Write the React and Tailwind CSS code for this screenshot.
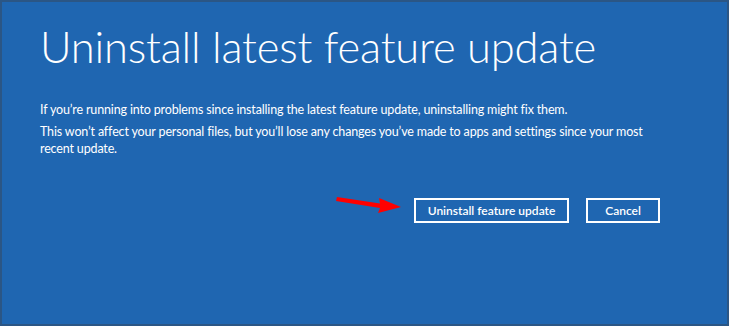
export default function App() {
  return (
    <div className="w-[729px] h-[326px] bg-[#1f66b1] border-2 border-[#2b5685] overflow-hidden font-['Segoe_UI','Lato','Liberation_Sans',sans-serif] text-white">
      <div className="w-[658px] pl-[38px] pt-[16px]">
        <h1 className="text-[43.5px] font-light leading-[56px] tracking-[-0.2px]">
          Uninstall latest feature update
        </h1>
        <div className="mt-[27px] text-[12.5px] leading-[17px] tracking-[-0.15px]">
          <p>If you’re running into problems since installing the latest feature update, uninstalling might fix them.</p>
          <p className="mt-[5px] w-[612px]">
            This won’t affect your personal files, but you’ll lose any changes you’ve made to apps and settings since your most recent update.
          </p>
        </div>
        <div className="mt-[41px] flex items-center justify-end gap-[17px]">
          <svg width="70" height="22" viewBox="0 0 70 22" className="mr-[-8px] mt-[-12px]">
            <path d="M2 3 L45 9.5 L44 4 L66 13 L43 19 L45 14 L1 7 Z" fill="#ff0000" />
          </svg>
          <button className="w-[155px] h-[25px] border-2 border-white text-[12px] font-semibold">
            Uninstall feature update
          </button>
          <button className="w-[74px] h-[25px] border-2 border-white text-[12px] font-semibold">
            Cancel
          </button>
        </div>
      </div>
    </div>
  );
}
